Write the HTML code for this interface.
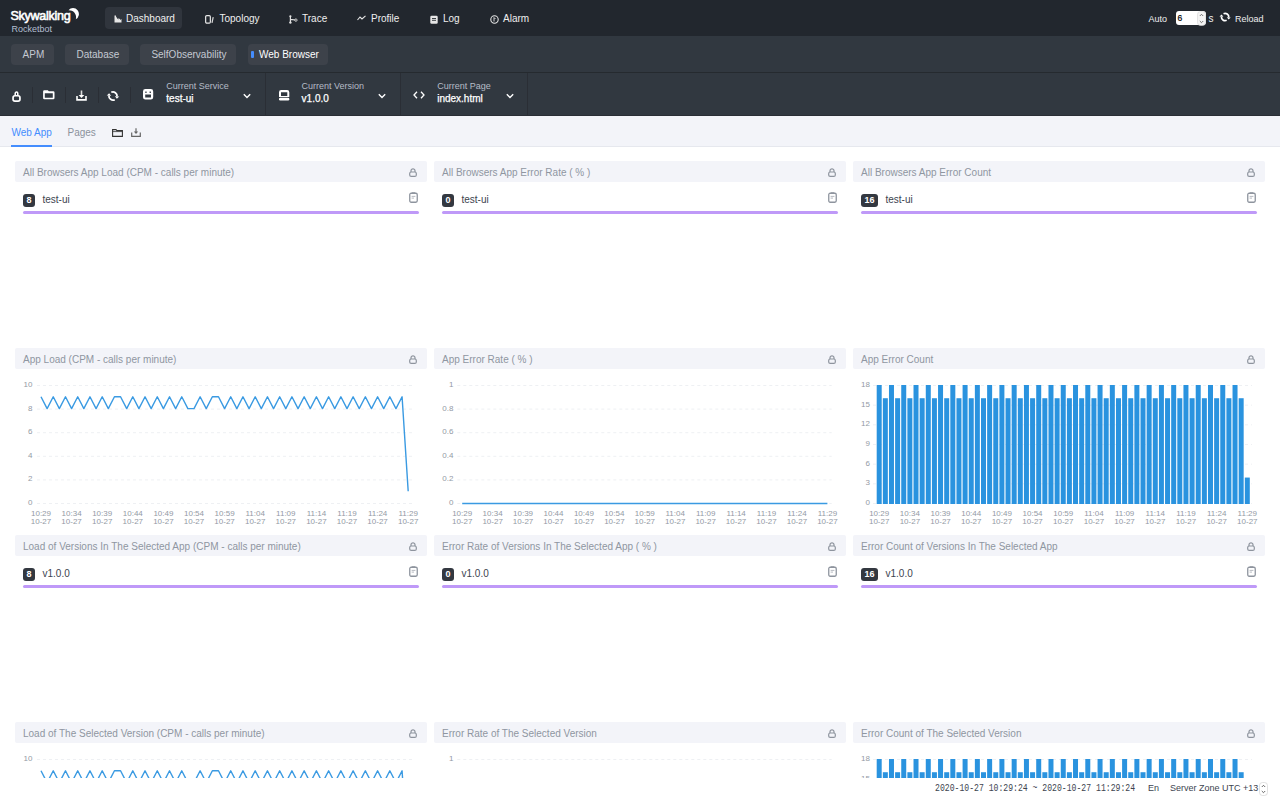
<!DOCTYPE html><html><head><meta charset="utf-8"><title>Rocketbot</title><style>
*{box-sizing:border-box;margin:0;padding:0}
html,body{width:1280px;height:800px;overflow:hidden;background:#fff;font-family:"Liberation Sans",sans-serif}
.a{position:absolute;white-space:nowrap}
#hdr{position:absolute;left:0;top:0;width:1280px;height:36px;background:#22272e}
#nav{position:absolute;left:0;top:36px;width:1280px;height:37px;background:#313840;border-bottom:1px solid #252a2f}
#bar{position:absolute;left:0;top:73px;width:1280px;height:43px;background:#313840;border-bottom:1px solid #2a2e35}
#tabs{position:absolute;left:0;top:116px;width:1280px;height:31px;background:#f3f4f9;border-bottom:1px solid #e6e8ee}
.navt{font-size:10px;color:#efefef;line-height:12px}
.navb{position:absolute;top:8px;height:21px;background:#30353d;border-radius:4px}
.grp{position:absolute;top:8px;height:21px;background:#3d424a;border-radius:4px}
.grpt{font-size:10px;color:#c4c9d2;line-height:12px}
.sep{position:absolute;top:87px;width:1px;height:16px;background:#2a2e35}
.lbl{font-size:9px;color:#b5bcc7;line-height:10px}
.val{font-size:10px;color:#fff;line-height:12px;-webkit-text-stroke:0.25px #fff}
.card-h{position:absolute;height:21px;width:412px;background:#f3f4f9;border-radius:2px}
.card-t{font-size:10px;color:#8f96a1;line-height:12px}
.badge{position:absolute;height:13px;border-radius:3px;background:#333840;color:#fff;font-size:9px;font-weight:700;line-height:13px;text-align:center;padding:0}
.item{font-size:10px;color:#3d444f;line-height:12px}
.pbar{position:absolute;height:3px;background:#bf99f8;border-radius:2px}
.ax{font-size:8px;color:#939aa5;line-height:8px;text-align:center}
.ay{font-size:8px;color:#939aa5;line-height:8px;text-align:right}
</style></head><body>
<div id="hdr">
<div class="a" style="left:10.5px;top:9.2px;font-size:12.5px;color:#fff;line-height:14px;letter-spacing:-0.25px;-webkit-text-stroke:0.6px #fff">Skywalking</div>
<svg class="a" style="left:67px;top:7px" width="13" height="14" viewBox="0 0 13 14"><path d="M1.52 3.16 A5.9 5.9 0 1 1 8.79 12.2 A7.1 7.1 0 0 0 1.52 3.16Z" fill="#fff"/></svg>
<div class="a" style="left:11.5px;top:24px;font-size:9px;color:#b4bfd2;line-height:10px">Rocketbot</div>
<div class="navb" style="left:105px;top:7px;width:77px;height:22px"></div>
<div class="a" style="left:114px;top:14.5px;line-height:0"><svg width="8" height="8" viewBox="0 0 8 8"><path d="M0.5 0.5V7.5H7.5V4L6 5V3.5L4.5 4.5V3L3 4V1.5L2 3V0.5Z" fill="#e6e6e6"/></svg></div>
<div class="a navt" style="left:126px;top:13.1px">Dashboard</div>
<div class="a" style="left:205px;top:14.5px;line-height:0"><svg width="9" height="9" viewBox="0 0 9 9"><rect x="0.65" y="0.65" width="4.7" height="7.4" rx="1.1" fill="none" stroke="#e6e6e6" stroke-width="1.2"/><path d="M8.2 2.2 L7 7.8" fill="none" stroke="#d8d8d8" stroke-width="1.2"/></svg></div>
<div class="a navt" style="left:219.5px;top:13.1px">Topology</div>
<div class="a" style="left:288.5px;top:14.5px;line-height:0"><svg width="9" height="9" viewBox="0 0 9 9"><path d="M1.4 1V7.6M1.4 4.4L6.4 5" stroke="#e0e0e0" stroke-width="1.2" fill="none"/><circle cx="1.4" cy="1.3" r="1.1" fill="#e0e0e0"/><circle cx="1.4" cy="7.6" r="1.2" fill="#e0e0e0"/><circle cx="6.9" cy="5.1" r="1.2" fill="none" stroke="#d0d0d0" stroke-width="0.9"/></svg></div>
<div class="a navt" style="left:302px;top:13.1px">Trace</div>
<div class="a" style="left:357px;top:14.5px;line-height:0"><svg width="9" height="6" viewBox="0 0 9 6"><path d="M0.5 5L3 2L5 4L8.5 0.8" stroke="#e6e6e6" stroke-width="1.1" fill="none"/></svg></div>
<div class="a navt" style="left:371px;top:13.1px">Profile</div>
<div class="a" style="left:430px;top:14.5px;line-height:0"><svg width="8" height="9" viewBox="0 0 8 9"><rect x="0.3" y="0.8" width="7.4" height="8" rx="1.3" fill="#e6e6e6"/><path d="M2 3.5H6M2 5.3H6" stroke="#252a2f" stroke-width="0.9"/></svg></div>
<div class="a navt" style="left:443px;top:13.1px">Log</div>
<div class="a" style="left:490px;top:14.5px;line-height:0"><svg width="9" height="9" viewBox="0 0 9 9"><circle cx="4.5" cy="4.5" r="3.7" fill="none" stroke="#e6e6e6" stroke-width="1.1"/><path d="M4 2.5V6.5M4 2.5L5.5 4" stroke="#e6e6e6" stroke-width="0.9" fill="none"/></svg></div>
<div class="a navt" style="left:503px;top:13.1px">Alarm</div>
<div class="a navt" style="left:1148.5px;top:13px;font-size:9px">Auto</div>
<div class="a" style="left:1176px;top:11px;width:30px;height:14px;background:#fff;border-radius:3px"></div>
<div class="a" style="left:1177.5px;top:13px;font-size:8.5px;color:#000;line-height:10px;-webkit-text-stroke:0.2px #000">6</div>
<svg class="a" style="left:1197px;top:11px" width="9" height="15" viewBox="0 0 9 15"><rect x="0.5" y="0.5" width="8" height="14" rx="3" fill="#f4f4f4" stroke="#d4d4d4" stroke-width="0.6"/><path d="M2.8 5L4.5 3.3L6.2 5M2.8 10L4.5 11.7L6.2 10" stroke="#555" stroke-width="0.8" fill="none"/></svg>
<div class="a navt" style="left:1208.5px;top:13.3px">s</div>
<svg class="a" style="left:1217px;top:8.1px" width="18" height="18" viewBox="0 0 20 20"><path d="M7.27 6.28A4.1 4.1 0 0 1 13.08 10.36M10.73 13.72A4.1 4.1 0 0 1 4.92 9.64" stroke="#fff" stroke-width="1.9" fill="none"/><path d="M15.27 10.55L10.89 10.17L12.86 12.85Z M2.73 9.45L7.11 9.83L5.14 7.15Z" fill="#fff"/></svg>
<div class="a navt" style="left:1235px;top:13px;font-size:9px">Reload</div>
</div>
<div id="nav">
<div class="grp" style="left:10.6px;width:43.8px"></div>
<div class="grp" style="left:65px;width:64.30000000000001px"></div>
<div class="grp" style="left:140px;width:96px"></div>
<div class="grp" style="left:247.5px;width:80.5px"></div>
<div class="a grpt" style="left:22.6px;top:13px;color:#c4c9d2">APM</div>
<div class="a grpt" style="left:76.5px;top:13px;color:#c4c9d2">Database</div>
<div class="a grpt" style="left:151.4px;top:13px;color:#c4c9d2">SelfObservability</div>
<div class="a grpt" style="left:259px;top:13px;color:#fff">Web Browser</div>
<div class="a" style="left:251px;top:15px;width:2.5px;height:7px;background:#448dfe;border-radius:1px"></div>
</div>
<div id="bar"></div>
<div class="sep" style="left:32px"></div>
<div class="sep" style="left:64.5px"></div>
<div class="sep" style="left:97.5px"></div>
<div class="sep" style="left:129.5px"></div>
<div class="a" style="left:265px;top:73px;width:1px;height:42px;background:#2a2e35"></div>
<div class="a" style="left:400px;top:73px;width:1px;height:42px;background:#2a2e35"></div>
<div class="a" style="left:527px;top:73px;width:1px;height:42px;background:#2a2e35"></div>
<div class="a" style="left:11.5px;top:90.5px;line-height:0"><svg width="9" height="11" viewBox="0 0 9 11"><path d="M3.2 4.6V2.4A1.3 1.3 0 0 1 5.8 2.4V4.6" stroke="#fff" stroke-width="1.5" fill="none"/><rect x="1.05" y="4.75" width="6.9" height="5.4" rx="1.9" fill="none" stroke="#fff" stroke-width="1.7"/></svg></div>
<div class="a" style="left:42.7px;top:89.7px;line-height:0"><svg width="12" height="10" viewBox="0 0 12 10"><path fill="#fff" fill-rule="evenodd" d="M1.3 0.2H4.8L5.8 1.2H10.3A1.2 1.2 0 0 1 11.5 2.4V8.1A1.2 1.2 0 0 1 10.3 9.3H1.3A1.2 1.2 0 0 1 0.1 8.1V1.4A1.2 1.2 0 0 1 1.3 0.2ZM1.8 3.3V7.7H9.8V3.3Z"/></svg></div>
<div class="a" style="left:75.7px;top:90px;line-height:0"><svg width="11" height="11" viewBox="0 0 11 11"><path d="M1 6V9.9H10V6" stroke="#fff" stroke-width="1.6" fill="none"/><path d="M5.5 0.5V6" stroke="#ddd" stroke-width="1.6"/><path d="M2.6 5L5.5 7.9L8.4 5Z" fill="#fff"/></svg></div>
<div class="a" style="left:104px;top:86px;line-height:0"><svg width="20" height="20" viewBox="0 0 20 20"><path d="M7.27 6.28A4.1 4.1 0 0 1 13.08 10.36M10.73 13.72A4.1 4.1 0 0 1 4.92 9.64" stroke="#fff" stroke-width="1.8" fill="none"/><path d="M15.27 10.55L10.89 10.17L12.86 12.85Z M2.73 9.45L7.11 9.83L5.14 7.15Z" fill="#fff"/></svg></div>
<div class="a" style="left:142.8px;top:89.4px;line-height:0"><svg width="11" height="11" viewBox="0 0 11 11"><path fill="#fff" fill-rule="evenodd" d="M2.4 0H7.8A2.4 2.4 0 0 1 10.2 2.4V8.2A2.4 2.4 0 0 1 7.8 10.6H2.4A2.4 2.4 0 0 1 0 8.2V2.4A2.4 2.4 0 0 1 2.4 0ZM2.3 2.4V4H3.6V2.4ZM6.6 2.4V4H7.9V2.4ZM2.2 5.6V8.4H8V5.6Z"/></svg></div>
<div class="a" style="left:278.7px;top:89.5px;line-height:0"><svg width="11" height="11" viewBox="0 0 11 11"><path fill="#fff" fill-rule="evenodd" d="M2.2 0H8.1A2.2 2.2 0 0 1 10.3 2.2V7.1H0V2.2A2.2 2.2 0 0 1 2.2 0ZM2 2.3V6H8.3V2.3Z"/><rect x="0" y="7.7" width="10.3" height="2.8" rx="1.2" fill="#fff"/></svg></div>
<div class="a" style="left:413px;top:90px;line-height:0"><svg width="12" height="10" viewBox="0 0 12 10"><path d="M4 1.8L1 5L4 8.2M8 1.8L11 5L8 8.2" stroke="#fff" stroke-width="1.3" fill="none"/></svg></div>
<div class="a lbl" style="left:166.3px;top:81px">Current Service</div>
<div class="a val" style="left:166.3px;top:93px">test-ui</div>
<div class="a" style="left:243px;top:93px;line-height:0"><svg width="8" height="6" viewBox="0 0 8 6"><path d="M0.8 1.2L4 4.4L7.2 1.2" stroke="#fff" stroke-width="1.4" fill="none"/></svg></div>
<div class="a lbl" style="left:301.6px;top:81px">Current Version</div>
<div class="a val" style="left:301.6px;top:93px">v1.0.0</div>
<div class="a" style="left:378px;top:93px;line-height:0"><svg width="8" height="6" viewBox="0 0 8 6"><path d="M0.8 1.2L4 4.4L7.2 1.2" stroke="#fff" stroke-width="1.4" fill="none"/></svg></div>
<div class="a lbl" style="left:437.2px;top:81px">Current Page</div>
<div class="a val" style="left:437.2px;top:93px">index.html</div>
<div class="a" style="left:505.5px;top:93px;line-height:0"><svg width="8" height="6" viewBox="0 0 8 6"><path d="M0.8 1.2L4 4.4L7.2 1.2" stroke="#fff" stroke-width="1.4" fill="none"/></svg></div>
<div id="tabs"></div>
<div class="a" style="left:11.5px;top:126.8px;font-size:10px;color:#448dfe;line-height:12px">Web App</div>
<div class="a" style="left:11px;top:145.3px;width:41px;height:1.7px;background:#448dfe"></div>
<div class="a" style="left:67.5px;top:126.8px;font-size:10px;color:#8b929c;line-height:12px">Pages</div>
<svg class="a" style="left:111.5px;top:129px" width="11" height="8" viewBox="0 0 11 8"><path d="M0.6 0.6H4L4.9 1.6H10.4V7.4H0.6Z" fill="none" stroke="#333" stroke-width="1.1"/><path d="M0.6 2.6H10.4" stroke="#333" stroke-width="0.8"/></svg>
<svg class="a" style="left:131px;top:127.5px" width="10" height="9" viewBox="0 0 10 9"><path d="M0.7 4.5V8.3H9.3V4.5" stroke="#666" stroke-width="1.2" fill="none"/><path d="M5 0.3V5" stroke="#666" stroke-width="1.2"/><path d="M2.8 3.4L5 6L7.2 3.4Z" fill="#666"/></svg>
<div class="a" style="left:0;top:147px;width:1280px;height:631px;overflow:hidden">
<div class="card-h" style="left:15px;top:14px"></div>
<div class="a card-t" style="left:23px;top:20px">All Browsers App Load (CPM - calls per minute)</div>
<div class="a" style="left:409px;top:20.5px;line-height:0"><svg width="8" height="9" viewBox="0 0 8 9"><path d="M2 4V2.8A2 2 0 0 1 6 2.8V4" stroke="#8e949e" stroke-width="1.2" fill="none"/><rect x="0.7" y="4" width="6.6" height="4.4" rx="1.5" fill="none" stroke="#8e949e" stroke-width="1.2"/></svg></div>
<div class="badge" style="left:23px;top:47px;width:12px">8</div>
<div class="a item" style="left:42.5px;top:47px">test-ui</div>
<div class="a" style="left:408.5px;top:44.8px;line-height:0"><svg width="9" height="11" viewBox="0 0 9 11"><rect x="0.75" y="1.25" width="7.5" height="9" rx="1.4" fill="none" stroke="#8e949e" stroke-width="1.3"/><path d="M2.8 0.3H6.2V2H2.8Z" fill="#8e949e"/><path d="M2.6 4.4H6.4M2.6 6.1H5" stroke="#a4a9b1" stroke-width="0.8"/></svg></div>
<div class="pbar" style="left:23px;top:64px;width:396px"></div>
<div class="card-h" style="left:434px;top:14px"></div>
<div class="a card-t" style="left:442px;top:20px">All Browsers App Error Rate ( % )</div>
<div class="a" style="left:828px;top:20.5px;line-height:0"><svg width="8" height="9" viewBox="0 0 8 9"><path d="M2 4V2.8A2 2 0 0 1 6 2.8V4" stroke="#8e949e" stroke-width="1.2" fill="none"/><rect x="0.7" y="4" width="6.6" height="4.4" rx="1.5" fill="none" stroke="#8e949e" stroke-width="1.2"/></svg></div>
<div class="badge" style="left:442px;top:47px;width:12px">0</div>
<div class="a item" style="left:461.5px;top:47px">test-ui</div>
<div class="a" style="left:827.5px;top:44.8px;line-height:0"><svg width="9" height="11" viewBox="0 0 9 11"><rect x="0.75" y="1.25" width="7.5" height="9" rx="1.4" fill="none" stroke="#8e949e" stroke-width="1.3"/><path d="M2.8 0.3H6.2V2H2.8Z" fill="#8e949e"/><path d="M2.6 4.4H6.4M2.6 6.1H5" stroke="#a4a9b1" stroke-width="0.8"/></svg></div>
<div class="pbar" style="left:442px;top:64px;width:396px"></div>
<div class="card-h" style="left:853px;top:14px"></div>
<div class="a card-t" style="left:861px;top:20px">All Browsers App Error Count</div>
<div class="a" style="left:1247px;top:20.5px;line-height:0"><svg width="8" height="9" viewBox="0 0 8 9"><path d="M2 4V2.8A2 2 0 0 1 6 2.8V4" stroke="#8e949e" stroke-width="1.2" fill="none"/><rect x="0.7" y="4" width="6.6" height="4.4" rx="1.5" fill="none" stroke="#8e949e" stroke-width="1.2"/></svg></div>
<div class="badge" style="left:861px;top:47px;width:17px">16</div>
<div class="a item" style="left:885.5px;top:47px">test-ui</div>
<div class="a" style="left:1246.5px;top:44.8px;line-height:0"><svg width="9" height="11" viewBox="0 0 9 11"><rect x="0.75" y="1.25" width="7.5" height="9" rx="1.4" fill="none" stroke="#8e949e" stroke-width="1.3"/><path d="M2.8 0.3H6.2V2H2.8Z" fill="#8e949e"/><path d="M2.6 4.4H6.4M2.6 6.1H5" stroke="#a4a9b1" stroke-width="0.8"/></svg></div>
<div class="pbar" style="left:861px;top:64px;width:396px"></div>
<div class="card-h" style="left:15px;top:201px"></div>
<div class="a card-t" style="left:23px;top:207px">App Load (CPM - calls per minute)</div>
<div class="a" style="left:409px;top:207.5px;line-height:0"><svg width="8" height="9" viewBox="0 0 8 9"><path d="M2 4V2.8A2 2 0 0 1 6 2.8V4" stroke="#8e949e" stroke-width="1.2" fill="none"/><rect x="0.7" y="4" width="6.6" height="4.4" rx="1.5" fill="none" stroke="#8e949e" stroke-width="1.2"/></svg></div>
<div class="a ay" style="left:2.3999999999999986px;width:30px;top:234.0px">10</div>
<div class="a ay" style="left:2.3999999999999986px;width:30px;top:257.6px">8</div>
<div class="a ay" style="left:2.3999999999999986px;width:30px;top:281.2px">6</div>
<div class="a ay" style="left:2.3999999999999986px;width:30px;top:304.8px">4</div>
<div class="a ay" style="left:2.3999999999999986px;width:30px;top:328.4px">2</div>
<div class="a ay" style="left:2.3999999999999986px;width:30px;top:352.0px">0</div>
<svg class="a" style="left:15px;top:201px" width="412" height="180"><line x1="22" y1="37.50" x2="397" y2="37.50" stroke="#eef0f3" stroke-width="1" stroke-dasharray="3 3"/><line x1="22" y1="61.10" x2="397" y2="61.10" stroke="#eef0f3" stroke-width="1" stroke-dasharray="3 3"/><line x1="22" y1="84.70" x2="397" y2="84.70" stroke="#eef0f3" stroke-width="1" stroke-dasharray="3 3"/><line x1="22" y1="108.30" x2="397" y2="108.30" stroke="#eef0f3" stroke-width="1" stroke-dasharray="3 3"/><line x1="22" y1="131.90" x2="397" y2="131.90" stroke="#eef0f3" stroke-width="1" stroke-dasharray="3 3"/><line x1="22" y1="155.50" x2="397" y2="155.50" stroke="#eef0f3" stroke-width="1" stroke-dasharray="3 3"/><polyline points="26.00,48.80 32.12,60.60 38.24,48.80 44.36,60.60 50.48,48.80 56.60,60.60 62.72,48.80 68.84,60.60 74.96,48.80 81.08,60.60 87.20,48.80 93.32,60.60 99.44,48.80 105.56,48.80 111.68,60.60 117.80,48.80 123.92,60.60 130.04,48.80 136.16,60.60 142.28,48.80 148.40,60.60 154.52,48.80 160.64,60.60 166.76,48.80 172.88,60.60 179.00,60.60 185.12,48.80 191.24,60.60 197.36,48.80 203.48,48.80 209.60,60.60 215.72,48.80 221.84,60.60 227.96,48.80 234.08,60.60 240.20,48.80 246.32,60.60 252.44,48.80 258.56,60.60 264.68,48.80 270.80,60.60 276.92,48.80 283.04,60.60 289.16,48.80 295.28,60.60 301.40,48.80 307.52,60.60 313.64,48.80 319.76,60.60 325.88,48.80 332.00,60.60 338.12,48.80 344.24,60.60 350.36,48.80 356.48,60.60 362.60,48.80 368.72,60.60 374.84,48.80 380.96,60.60 387.08,48.80 393.20,143.20" fill="none" stroke="#3a9ae2" stroke-width="1.4" stroke-linejoin="round"/></svg>
<div class="a ax" style="left:21.0px;width:40px;top:362.5px">10:29<br>10-27</div>
<div class="a ax" style="left:51.599999999999994px;width:40px;top:362.5px">10:34<br>10-27</div>
<div class="a ax" style="left:82.2px;width:40px;top:362.5px">10:39<br>10-27</div>
<div class="a ax" style="left:112.80000000000001px;width:40px;top:362.5px">10:44<br>10-27</div>
<div class="a ax" style="left:143.4px;width:40px;top:362.5px">10:49<br>10-27</div>
<div class="a ax" style="left:174.0px;width:40px;top:362.5px">10:54<br>10-27</div>
<div class="a ax" style="left:204.6px;width:40px;top:362.5px">10:59<br>10-27</div>
<div class="a ax" style="left:235.20000000000002px;width:40px;top:362.5px">11:04<br>10-27</div>
<div class="a ax" style="left:265.8px;width:40px;top:362.5px">11:09<br>10-27</div>
<div class="a ax" style="left:296.4px;width:40px;top:362.5px">11:14<br>10-27</div>
<div class="a ax" style="left:327.0px;width:40px;top:362.5px">11:19<br>10-27</div>
<div class="a ax" style="left:357.6px;width:40px;top:362.5px">11:24<br>10-27</div>
<div class="a ax" style="left:388.2px;width:40px;top:362.5px">11:29<br>10-27</div>
<div class="card-h" style="left:434px;top:201px"></div>
<div class="a card-t" style="left:442px;top:207px">App Error Rate ( % )</div>
<div class="a" style="left:828px;top:207.5px;line-height:0"><svg width="8" height="9" viewBox="0 0 8 9"><path d="M2 4V2.8A2 2 0 0 1 6 2.8V4" stroke="#8e949e" stroke-width="1.2" fill="none"/><rect x="0.7" y="4" width="6.6" height="4.4" rx="1.5" fill="none" stroke="#8e949e" stroke-width="1.2"/></svg></div>
<div class="a ay" style="left:423.4px;width:30px;top:234.0px">1</div>
<div class="a ay" style="left:423.4px;width:30px;top:257.6px">0.8</div>
<div class="a ay" style="left:423.4px;width:30px;top:281.2px">0.6</div>
<div class="a ay" style="left:423.4px;width:30px;top:304.8px">0.4</div>
<div class="a ay" style="left:423.4px;width:30px;top:328.4px">0.2</div>
<div class="a ay" style="left:423.4px;width:30px;top:352.0px">0</div>
<svg class="a" style="left:434px;top:201px" width="412" height="180"><line x1="23.3" y1="37.50" x2="397.7" y2="37.50" stroke="#eef0f3" stroke-width="1" stroke-dasharray="3 3"/><line x1="23.3" y1="61.10" x2="397.7" y2="61.10" stroke="#eef0f3" stroke-width="1" stroke-dasharray="3 3"/><line x1="23.3" y1="84.70" x2="397.7" y2="84.70" stroke="#eef0f3" stroke-width="1" stroke-dasharray="3 3"/><line x1="23.3" y1="108.30" x2="397.7" y2="108.30" stroke="#eef0f3" stroke-width="1" stroke-dasharray="3 3"/><line x1="23.3" y1="131.90" x2="397.7" y2="131.90" stroke="#eef0f3" stroke-width="1" stroke-dasharray="3 3"/><line x1="23.3" y1="155.50" x2="397.7" y2="155.50" stroke="#eef0f3" stroke-width="1" stroke-dasharray="3 3"/><line x1="28.2" y1="155.50" x2="393.4" y2="155.50" stroke="#3a9ae2" stroke-width="1.4"/></svg>
<div class="a ax" style="left:442.2px;width:40px;top:362.5px">10:29<br>10-27</div>
<div class="a ax" style="left:472.6333333333333px;width:40px;top:362.5px">10:34<br>10-27</div>
<div class="a ax" style="left:503.0666666666666px;width:40px;top:362.5px">10:39<br>10-27</div>
<div class="a ax" style="left:533.5px;width:40px;top:362.5px">10:44<br>10-27</div>
<div class="a ax" style="left:563.9333333333333px;width:40px;top:362.5px">10:49<br>10-27</div>
<div class="a ax" style="left:594.3666666666667px;width:40px;top:362.5px">10:54<br>10-27</div>
<div class="a ax" style="left:624.8px;width:40px;top:362.5px">10:59<br>10-27</div>
<div class="a ax" style="left:655.2333333333333px;width:40px;top:362.5px">11:04<br>10-27</div>
<div class="a ax" style="left:685.6666666666666px;width:40px;top:362.5px">11:09<br>10-27</div>
<div class="a ax" style="left:716.1px;width:40px;top:362.5px">11:14<br>10-27</div>
<div class="a ax" style="left:746.5333333333333px;width:40px;top:362.5px">11:19<br>10-27</div>
<div class="a ax" style="left:776.9666666666667px;width:40px;top:362.5px">11:24<br>10-27</div>
<div class="a ax" style="left:807.4px;width:40px;top:362.5px">11:29<br>10-27</div>
<div class="card-h" style="left:853px;top:201px"></div>
<div class="a card-t" style="left:861px;top:207px">App Error Count</div>
<div class="a" style="left:1247px;top:207.5px;line-height:0"><svg width="8" height="9" viewBox="0 0 8 9"><path d="M2 4V2.8A2 2 0 0 1 6 2.8V4" stroke="#8e949e" stroke-width="1.2" fill="none"/><rect x="0.7" y="4" width="6.6" height="4.4" rx="1.5" fill="none" stroke="#8e949e" stroke-width="1.2"/></svg></div>
<div class="a ay" style="left:840px;width:30px;top:234.0px">18</div>
<div class="a ay" style="left:840px;width:30px;top:253.66666666666669px">15</div>
<div class="a ay" style="left:840px;width:30px;top:273.3333333333333px">12</div>
<div class="a ay" style="left:840px;width:30px;top:293.0px">9</div>
<div class="a ay" style="left:840px;width:30px;top:312.6666666666667px">6</div>
<div class="a ay" style="left:840px;width:30px;top:332.3333333333333px">3</div>
<div class="a ay" style="left:840px;width:30px;top:352.0px">0</div>
<svg class="a" style="left:853px;top:201px" width="412" height="180"><line x1="20" y1="37.50" x2="399" y2="37.50" stroke="#eef0f3" stroke-width="1" stroke-dasharray="3 3"/><line x1="20" y1="57.17" x2="399" y2="57.17" stroke="#eef0f3" stroke-width="1" stroke-dasharray="3 3"/><line x1="20" y1="76.83" x2="399" y2="76.83" stroke="#eef0f3" stroke-width="1" stroke-dasharray="3 3"/><line x1="20" y1="96.50" x2="399" y2="96.50" stroke="#eef0f3" stroke-width="1" stroke-dasharray="3 3"/><line x1="20" y1="116.17" x2="399" y2="116.17" stroke="#eef0f3" stroke-width="1" stroke-dasharray="3 3"/><line x1="20" y1="135.83" x2="399" y2="135.83" stroke="#eef0f3" stroke-width="1" stroke-dasharray="3 3"/><line x1="20" y1="155.50" x2="399" y2="155.50" stroke="#eef0f3" stroke-width="1" stroke-dasharray="3 3"/><rect x="23.70" y="37.00" width="5" height="119.00" fill="#2a93df"/><rect x="29.84" y="50.22" width="5" height="105.78" fill="#2a93df"/><rect x="35.97" y="37.00" width="5" height="119.00" fill="#2a93df"/><rect x="42.11" y="50.22" width="5" height="105.78" fill="#2a93df"/><rect x="48.24" y="37.00" width="5" height="119.00" fill="#2a93df"/><rect x="54.38" y="50.22" width="5" height="105.78" fill="#2a93df"/><rect x="60.51" y="37.00" width="5" height="119.00" fill="#2a93df"/><rect x="66.65" y="50.22" width="5" height="105.78" fill="#2a93df"/><rect x="72.78" y="37.00" width="5" height="119.00" fill="#2a93df"/><rect x="78.92" y="50.22" width="5" height="105.78" fill="#2a93df"/><rect x="85.05" y="37.00" width="5" height="119.00" fill="#2a93df"/><rect x="91.19" y="50.22" width="5" height="105.78" fill="#2a93df"/><rect x="97.32" y="37.00" width="5" height="119.00" fill="#2a93df"/><rect x="103.46" y="50.22" width="5" height="105.78" fill="#2a93df"/><rect x="109.59" y="37.00" width="5" height="119.00" fill="#2a93df"/><rect x="115.73" y="50.22" width="5" height="105.78" fill="#2a93df"/><rect x="121.86" y="37.00" width="5" height="119.00" fill="#2a93df"/><rect x="128.00" y="50.22" width="5" height="105.78" fill="#2a93df"/><rect x="134.13" y="37.00" width="5" height="119.00" fill="#2a93df"/><rect x="140.27" y="50.22" width="5" height="105.78" fill="#2a93df"/><rect x="146.40" y="37.00" width="5" height="119.00" fill="#2a93df"/><rect x="152.53" y="50.22" width="5" height="105.78" fill="#2a93df"/><rect x="158.67" y="37.00" width="5" height="119.00" fill="#2a93df"/><rect x="164.81" y="50.22" width="5" height="105.78" fill="#2a93df"/><rect x="170.94" y="37.00" width="5" height="119.00" fill="#2a93df"/><rect x="177.08" y="50.22" width="5" height="105.78" fill="#2a93df"/><rect x="183.21" y="37.00" width="5" height="119.00" fill="#2a93df"/><rect x="189.34" y="50.22" width="5" height="105.78" fill="#2a93df"/><rect x="195.48" y="37.00" width="5" height="119.00" fill="#2a93df"/><rect x="201.62" y="50.22" width="5" height="105.78" fill="#2a93df"/><rect x="207.75" y="37.00" width="5" height="119.00" fill="#2a93df"/><rect x="213.89" y="50.22" width="5" height="105.78" fill="#2a93df"/><rect x="220.02" y="37.00" width="5" height="119.00" fill="#2a93df"/><rect x="226.16" y="50.22" width="5" height="105.78" fill="#2a93df"/><rect x="232.29" y="37.00" width="5" height="119.00" fill="#2a93df"/><rect x="238.43" y="50.22" width="5" height="105.78" fill="#2a93df"/><rect x="244.56" y="37.00" width="5" height="119.00" fill="#2a93df"/><rect x="250.70" y="50.22" width="5" height="105.78" fill="#2a93df"/><rect x="256.83" y="37.00" width="5" height="119.00" fill="#2a93df"/><rect x="262.97" y="50.22" width="5" height="105.78" fill="#2a93df"/><rect x="269.10" y="37.00" width="5" height="119.00" fill="#2a93df"/><rect x="275.24" y="50.22" width="5" height="105.78" fill="#2a93df"/><rect x="281.37" y="37.00" width="5" height="119.00" fill="#2a93df"/><rect x="287.50" y="50.22" width="5" height="105.78" fill="#2a93df"/><rect x="293.64" y="37.00" width="5" height="119.00" fill="#2a93df"/><rect x="299.78" y="50.22" width="5" height="105.78" fill="#2a93df"/><rect x="305.91" y="37.00" width="5" height="119.00" fill="#2a93df"/><rect x="312.05" y="50.22" width="5" height="105.78" fill="#2a93df"/><rect x="318.18" y="37.00" width="5" height="119.00" fill="#2a93df"/><rect x="324.31" y="50.22" width="5" height="105.78" fill="#2a93df"/><rect x="330.45" y="37.00" width="5" height="119.00" fill="#2a93df"/><rect x="336.59" y="50.22" width="5" height="105.78" fill="#2a93df"/><rect x="342.72" y="37.00" width="5" height="119.00" fill="#2a93df"/><rect x="348.86" y="50.22" width="5" height="105.78" fill="#2a93df"/><rect x="354.99" y="37.00" width="5" height="119.00" fill="#2a93df"/><rect x="361.12" y="50.22" width="5" height="105.78" fill="#2a93df"/><rect x="367.26" y="37.00" width="5" height="119.00" fill="#2a93df"/><rect x="373.40" y="50.22" width="5" height="105.78" fill="#2a93df"/><rect x="379.53" y="37.00" width="5" height="119.00" fill="#2a93df"/><rect x="385.67" y="50.22" width="5" height="105.78" fill="#2a93df"/><rect x="391.80" y="129.56" width="5" height="26.44" fill="#2a93df"/></svg>
<div class="a ax" style="left:859.2px;width:40px;top:362.5px">10:29<br>10-27</div>
<div class="a ax" style="left:889.875px;width:40px;top:362.5px">10:34<br>10-27</div>
<div class="a ax" style="left:920.5500000000001px;width:40px;top:362.5px">10:39<br>10-27</div>
<div class="a ax" style="left:951.225px;width:40px;top:362.5px">10:44<br>10-27</div>
<div class="a ax" style="left:981.9000000000001px;width:40px;top:362.5px">10:49<br>10-27</div>
<div class="a ax" style="left:1012.575px;width:40px;top:362.5px">10:54<br>10-27</div>
<div class="a ax" style="left:1043.25px;width:40px;top:362.5px">10:59<br>10-27</div>
<div class="a ax" style="left:1073.9250000000002px;width:40px;top:362.5px">11:04<br>10-27</div>
<div class="a ax" style="left:1104.6000000000001px;width:40px;top:362.5px">11:09<br>10-27</div>
<div class="a ax" style="left:1135.275px;width:40px;top:362.5px">11:14<br>10-27</div>
<div class="a ax" style="left:1165.95px;width:40px;top:362.5px">11:19<br>10-27</div>
<div class="a ax" style="left:1196.625px;width:40px;top:362.5px">11:24<br>10-27</div>
<div class="a ax" style="left:1227.3000000000002px;width:40px;top:362.5px">11:29<br>10-27</div>
<div class="card-h" style="left:15px;top:388px"></div>
<div class="a card-t" style="left:23px;top:394px">Load of Versions In The Selected App (CPM - calls per minute)</div>
<div class="a" style="left:409px;top:394.5px;line-height:0"><svg width="8" height="9" viewBox="0 0 8 9"><path d="M2 4V2.8A2 2 0 0 1 6 2.8V4" stroke="#8e949e" stroke-width="1.2" fill="none"/><rect x="0.7" y="4" width="6.6" height="4.4" rx="1.5" fill="none" stroke="#8e949e" stroke-width="1.2"/></svg></div>
<div class="badge" style="left:23px;top:421px;width:12px">8</div>
<div class="a item" style="left:42.5px;top:421px">v1.0.0</div>
<div class="a" style="left:408.5px;top:418.8px;line-height:0"><svg width="9" height="11" viewBox="0 0 9 11"><rect x="0.75" y="1.25" width="7.5" height="9" rx="1.4" fill="none" stroke="#8e949e" stroke-width="1.3"/><path d="M2.8 0.3H6.2V2H2.8Z" fill="#8e949e"/><path d="M2.6 4.4H6.4M2.6 6.1H5" stroke="#a4a9b1" stroke-width="0.8"/></svg></div>
<div class="pbar" style="left:23px;top:438px;width:396px"></div>
<div class="card-h" style="left:434px;top:388px"></div>
<div class="a card-t" style="left:442px;top:394px">Error Rate of Versions In The Selected App ( % )</div>
<div class="a" style="left:828px;top:394.5px;line-height:0"><svg width="8" height="9" viewBox="0 0 8 9"><path d="M2 4V2.8A2 2 0 0 1 6 2.8V4" stroke="#8e949e" stroke-width="1.2" fill="none"/><rect x="0.7" y="4" width="6.6" height="4.4" rx="1.5" fill="none" stroke="#8e949e" stroke-width="1.2"/></svg></div>
<div class="badge" style="left:442px;top:421px;width:12px">0</div>
<div class="a item" style="left:461.5px;top:421px">v1.0.0</div>
<div class="a" style="left:827.5px;top:418.8px;line-height:0"><svg width="9" height="11" viewBox="0 0 9 11"><rect x="0.75" y="1.25" width="7.5" height="9" rx="1.4" fill="none" stroke="#8e949e" stroke-width="1.3"/><path d="M2.8 0.3H6.2V2H2.8Z" fill="#8e949e"/><path d="M2.6 4.4H6.4M2.6 6.1H5" stroke="#a4a9b1" stroke-width="0.8"/></svg></div>
<div class="pbar" style="left:442px;top:438px;width:396px"></div>
<div class="card-h" style="left:853px;top:388px"></div>
<div class="a card-t" style="left:861px;top:394px">Error Count of Versions In The Selected App</div>
<div class="a" style="left:1247px;top:394.5px;line-height:0"><svg width="8" height="9" viewBox="0 0 8 9"><path d="M2 4V2.8A2 2 0 0 1 6 2.8V4" stroke="#8e949e" stroke-width="1.2" fill="none"/><rect x="0.7" y="4" width="6.6" height="4.4" rx="1.5" fill="none" stroke="#8e949e" stroke-width="1.2"/></svg></div>
<div class="badge" style="left:861px;top:421px;width:17px">16</div>
<div class="a item" style="left:885.5px;top:421px">v1.0.0</div>
<div class="a" style="left:1246.5px;top:418.8px;line-height:0"><svg width="9" height="11" viewBox="0 0 9 11"><rect x="0.75" y="1.25" width="7.5" height="9" rx="1.4" fill="none" stroke="#8e949e" stroke-width="1.3"/><path d="M2.8 0.3H6.2V2H2.8Z" fill="#8e949e"/><path d="M2.6 4.4H6.4M2.6 6.1H5" stroke="#a4a9b1" stroke-width="0.8"/></svg></div>
<div class="pbar" style="left:861px;top:438px;width:396px"></div>
<div class="card-h" style="left:15px;top:575px"></div>
<div class="a card-t" style="left:23px;top:581px">Load of The Selected Version (CPM - calls per minute)</div>
<div class="a" style="left:409px;top:581.5px;line-height:0"><svg width="8" height="9" viewBox="0 0 8 9"><path d="M2 4V2.8A2 2 0 0 1 6 2.8V4" stroke="#8e949e" stroke-width="1.2" fill="none"/><rect x="0.7" y="4" width="6.6" height="4.4" rx="1.5" fill="none" stroke="#8e949e" stroke-width="1.2"/></svg></div>
<div class="a ay" style="left:2.3999999999999986px;width:30px;top:608.0px">10</div>
<div class="a ay" style="left:2.3999999999999986px;width:30px;top:631.6px">8</div>
<div class="a ay" style="left:2.3999999999999986px;width:30px;top:655.2px">6</div>
<div class="a ay" style="left:2.3999999999999986px;width:30px;top:678.8px">4</div>
<div class="a ay" style="left:2.3999999999999986px;width:30px;top:702.4px">2</div>
<div class="a ay" style="left:2.3999999999999986px;width:30px;top:726.0px">0</div>
<svg class="a" style="left:15px;top:575px" width="412" height="180"><line x1="22" y1="37.50" x2="397" y2="37.50" stroke="#eef0f3" stroke-width="1" stroke-dasharray="3 3"/><line x1="22" y1="61.10" x2="397" y2="61.10" stroke="#eef0f3" stroke-width="1" stroke-dasharray="3 3"/><line x1="22" y1="84.70" x2="397" y2="84.70" stroke="#eef0f3" stroke-width="1" stroke-dasharray="3 3"/><line x1="22" y1="108.30" x2="397" y2="108.30" stroke="#eef0f3" stroke-width="1" stroke-dasharray="3 3"/><line x1="22" y1="131.90" x2="397" y2="131.90" stroke="#eef0f3" stroke-width="1" stroke-dasharray="3 3"/><line x1="22" y1="155.50" x2="397" y2="155.50" stroke="#eef0f3" stroke-width="1" stroke-dasharray="3 3"/><polyline points="26.00,48.80 32.12,60.60 38.24,48.80 44.36,60.60 50.48,48.80 56.60,60.60 62.72,48.80 68.84,60.60 74.96,48.80 81.08,60.60 87.20,48.80 93.32,60.60 99.44,48.80 105.56,48.80 111.68,60.60 117.80,48.80 123.92,60.60 130.04,48.80 136.16,60.60 142.28,48.80 148.40,60.60 154.52,48.80 160.64,60.60 166.76,48.80 172.88,60.60 179.00,60.60 185.12,48.80 191.24,60.60 197.36,48.80 203.48,48.80 209.60,60.60 215.72,48.80 221.84,60.60 227.96,48.80 234.08,60.60 240.20,48.80 246.32,60.60 252.44,48.80 258.56,60.60 264.68,48.80 270.80,60.60 276.92,48.80 283.04,60.60 289.16,48.80 295.28,60.60 301.40,48.80 307.52,60.60 313.64,48.80 319.76,60.60 325.88,48.80 332.00,60.60 338.12,48.80 344.24,60.60 350.36,48.80 356.48,60.60 362.60,48.80 368.72,60.60 374.84,48.80 380.96,60.60 387.08,48.80 393.20,143.20" fill="none" stroke="#3a9ae2" stroke-width="1.4" stroke-linejoin="round"/></svg>
<div class="a ax" style="left:21.0px;width:40px;top:736.5px">10:29<br>10-27</div>
<div class="a ax" style="left:51.599999999999994px;width:40px;top:736.5px">10:34<br>10-27</div>
<div class="a ax" style="left:82.2px;width:40px;top:736.5px">10:39<br>10-27</div>
<div class="a ax" style="left:112.80000000000001px;width:40px;top:736.5px">10:44<br>10-27</div>
<div class="a ax" style="left:143.4px;width:40px;top:736.5px">10:49<br>10-27</div>
<div class="a ax" style="left:174.0px;width:40px;top:736.5px">10:54<br>10-27</div>
<div class="a ax" style="left:204.6px;width:40px;top:736.5px">10:59<br>10-27</div>
<div class="a ax" style="left:235.20000000000002px;width:40px;top:736.5px">11:04<br>10-27</div>
<div class="a ax" style="left:265.8px;width:40px;top:736.5px">11:09<br>10-27</div>
<div class="a ax" style="left:296.4px;width:40px;top:736.5px">11:14<br>10-27</div>
<div class="a ax" style="left:327.0px;width:40px;top:736.5px">11:19<br>10-27</div>
<div class="a ax" style="left:357.6px;width:40px;top:736.5px">11:24<br>10-27</div>
<div class="a ax" style="left:388.2px;width:40px;top:736.5px">11:29<br>10-27</div>
<div class="card-h" style="left:434px;top:575px"></div>
<div class="a card-t" style="left:442px;top:581px">Error Rate of The Selected Version</div>
<div class="a" style="left:828px;top:581.5px;line-height:0"><svg width="8" height="9" viewBox="0 0 8 9"><path d="M2 4V2.8A2 2 0 0 1 6 2.8V4" stroke="#8e949e" stroke-width="1.2" fill="none"/><rect x="0.7" y="4" width="6.6" height="4.4" rx="1.5" fill="none" stroke="#8e949e" stroke-width="1.2"/></svg></div>
<div class="a ay" style="left:423.4px;width:30px;top:608.0px">1</div>
<div class="a ay" style="left:423.4px;width:30px;top:631.6px">0.8</div>
<div class="a ay" style="left:423.4px;width:30px;top:655.2px">0.6</div>
<div class="a ay" style="left:423.4px;width:30px;top:678.8px">0.4</div>
<div class="a ay" style="left:423.4px;width:30px;top:702.4px">0.2</div>
<div class="a ay" style="left:423.4px;width:30px;top:726.0px">0</div>
<svg class="a" style="left:434px;top:575px" width="412" height="180"><line x1="23.3" y1="37.50" x2="397.7" y2="37.50" stroke="#eef0f3" stroke-width="1" stroke-dasharray="3 3"/><line x1="23.3" y1="61.10" x2="397.7" y2="61.10" stroke="#eef0f3" stroke-width="1" stroke-dasharray="3 3"/><line x1="23.3" y1="84.70" x2="397.7" y2="84.70" stroke="#eef0f3" stroke-width="1" stroke-dasharray="3 3"/><line x1="23.3" y1="108.30" x2="397.7" y2="108.30" stroke="#eef0f3" stroke-width="1" stroke-dasharray="3 3"/><line x1="23.3" y1="131.90" x2="397.7" y2="131.90" stroke="#eef0f3" stroke-width="1" stroke-dasharray="3 3"/><line x1="23.3" y1="155.50" x2="397.7" y2="155.50" stroke="#eef0f3" stroke-width="1" stroke-dasharray="3 3"/><line x1="28.2" y1="155.50" x2="393.4" y2="155.50" stroke="#3a9ae2" stroke-width="1.4"/></svg>
<div class="a ax" style="left:442.2px;width:40px;top:736.5px">10:29<br>10-27</div>
<div class="a ax" style="left:472.6333333333333px;width:40px;top:736.5px">10:34<br>10-27</div>
<div class="a ax" style="left:503.0666666666666px;width:40px;top:736.5px">10:39<br>10-27</div>
<div class="a ax" style="left:533.5px;width:40px;top:736.5px">10:44<br>10-27</div>
<div class="a ax" style="left:563.9333333333333px;width:40px;top:736.5px">10:49<br>10-27</div>
<div class="a ax" style="left:594.3666666666667px;width:40px;top:736.5px">10:54<br>10-27</div>
<div class="a ax" style="left:624.8px;width:40px;top:736.5px">10:59<br>10-27</div>
<div class="a ax" style="left:655.2333333333333px;width:40px;top:736.5px">11:04<br>10-27</div>
<div class="a ax" style="left:685.6666666666666px;width:40px;top:736.5px">11:09<br>10-27</div>
<div class="a ax" style="left:716.1px;width:40px;top:736.5px">11:14<br>10-27</div>
<div class="a ax" style="left:746.5333333333333px;width:40px;top:736.5px">11:19<br>10-27</div>
<div class="a ax" style="left:776.9666666666667px;width:40px;top:736.5px">11:24<br>10-27</div>
<div class="a ax" style="left:807.4px;width:40px;top:736.5px">11:29<br>10-27</div>
<div class="card-h" style="left:853px;top:575px"></div>
<div class="a card-t" style="left:861px;top:581px">Error Count of The Selected Version</div>
<div class="a" style="left:1247px;top:581.5px;line-height:0"><svg width="8" height="9" viewBox="0 0 8 9"><path d="M2 4V2.8A2 2 0 0 1 6 2.8V4" stroke="#8e949e" stroke-width="1.2" fill="none"/><rect x="0.7" y="4" width="6.6" height="4.4" rx="1.5" fill="none" stroke="#8e949e" stroke-width="1.2"/></svg></div>
<div class="a ay" style="left:840px;width:30px;top:608.0px">18</div>
<div class="a ay" style="left:840px;width:30px;top:627.6666666666666px">15</div>
<div class="a ay" style="left:840px;width:30px;top:647.3333333333334px">12</div>
<div class="a ay" style="left:840px;width:30px;top:667.0px">9</div>
<div class="a ay" style="left:840px;width:30px;top:686.6666666666666px">6</div>
<div class="a ay" style="left:840px;width:30px;top:706.3333333333334px">3</div>
<div class="a ay" style="left:840px;width:30px;top:726.0px">0</div>
<svg class="a" style="left:853px;top:575px" width="412" height="180"><line x1="20" y1="37.50" x2="399" y2="37.50" stroke="#eef0f3" stroke-width="1" stroke-dasharray="3 3"/><line x1="20" y1="57.17" x2="399" y2="57.17" stroke="#eef0f3" stroke-width="1" stroke-dasharray="3 3"/><line x1="20" y1="76.83" x2="399" y2="76.83" stroke="#eef0f3" stroke-width="1" stroke-dasharray="3 3"/><line x1="20" y1="96.50" x2="399" y2="96.50" stroke="#eef0f3" stroke-width="1" stroke-dasharray="3 3"/><line x1="20" y1="116.17" x2="399" y2="116.17" stroke="#eef0f3" stroke-width="1" stroke-dasharray="3 3"/><line x1="20" y1="135.83" x2="399" y2="135.83" stroke="#eef0f3" stroke-width="1" stroke-dasharray="3 3"/><line x1="20" y1="155.50" x2="399" y2="155.50" stroke="#eef0f3" stroke-width="1" stroke-dasharray="3 3"/><rect x="23.70" y="37.00" width="5" height="119.00" fill="#2a93df"/><rect x="29.84" y="50.22" width="5" height="105.78" fill="#2a93df"/><rect x="35.97" y="37.00" width="5" height="119.00" fill="#2a93df"/><rect x="42.11" y="50.22" width="5" height="105.78" fill="#2a93df"/><rect x="48.24" y="37.00" width="5" height="119.00" fill="#2a93df"/><rect x="54.38" y="50.22" width="5" height="105.78" fill="#2a93df"/><rect x="60.51" y="37.00" width="5" height="119.00" fill="#2a93df"/><rect x="66.65" y="50.22" width="5" height="105.78" fill="#2a93df"/><rect x="72.78" y="37.00" width="5" height="119.00" fill="#2a93df"/><rect x="78.92" y="50.22" width="5" height="105.78" fill="#2a93df"/><rect x="85.05" y="37.00" width="5" height="119.00" fill="#2a93df"/><rect x="91.19" y="50.22" width="5" height="105.78" fill="#2a93df"/><rect x="97.32" y="37.00" width="5" height="119.00" fill="#2a93df"/><rect x="103.46" y="50.22" width="5" height="105.78" fill="#2a93df"/><rect x="109.59" y="37.00" width="5" height="119.00" fill="#2a93df"/><rect x="115.73" y="50.22" width="5" height="105.78" fill="#2a93df"/><rect x="121.86" y="37.00" width="5" height="119.00" fill="#2a93df"/><rect x="128.00" y="50.22" width="5" height="105.78" fill="#2a93df"/><rect x="134.13" y="37.00" width="5" height="119.00" fill="#2a93df"/><rect x="140.27" y="50.22" width="5" height="105.78" fill="#2a93df"/><rect x="146.40" y="37.00" width="5" height="119.00" fill="#2a93df"/><rect x="152.53" y="50.22" width="5" height="105.78" fill="#2a93df"/><rect x="158.67" y="37.00" width="5" height="119.00" fill="#2a93df"/><rect x="164.81" y="50.22" width="5" height="105.78" fill="#2a93df"/><rect x="170.94" y="37.00" width="5" height="119.00" fill="#2a93df"/><rect x="177.08" y="50.22" width="5" height="105.78" fill="#2a93df"/><rect x="183.21" y="37.00" width="5" height="119.00" fill="#2a93df"/><rect x="189.34" y="50.22" width="5" height="105.78" fill="#2a93df"/><rect x="195.48" y="37.00" width="5" height="119.00" fill="#2a93df"/><rect x="201.62" y="50.22" width="5" height="105.78" fill="#2a93df"/><rect x="207.75" y="37.00" width="5" height="119.00" fill="#2a93df"/><rect x="213.89" y="50.22" width="5" height="105.78" fill="#2a93df"/><rect x="220.02" y="37.00" width="5" height="119.00" fill="#2a93df"/><rect x="226.16" y="50.22" width="5" height="105.78" fill="#2a93df"/><rect x="232.29" y="37.00" width="5" height="119.00" fill="#2a93df"/><rect x="238.43" y="50.22" width="5" height="105.78" fill="#2a93df"/><rect x="244.56" y="37.00" width="5" height="119.00" fill="#2a93df"/><rect x="250.70" y="50.22" width="5" height="105.78" fill="#2a93df"/><rect x="256.83" y="37.00" width="5" height="119.00" fill="#2a93df"/><rect x="262.97" y="50.22" width="5" height="105.78" fill="#2a93df"/><rect x="269.10" y="37.00" width="5" height="119.00" fill="#2a93df"/><rect x="275.24" y="50.22" width="5" height="105.78" fill="#2a93df"/><rect x="281.37" y="37.00" width="5" height="119.00" fill="#2a93df"/><rect x="287.50" y="50.22" width="5" height="105.78" fill="#2a93df"/><rect x="293.64" y="37.00" width="5" height="119.00" fill="#2a93df"/><rect x="299.78" y="50.22" width="5" height="105.78" fill="#2a93df"/><rect x="305.91" y="37.00" width="5" height="119.00" fill="#2a93df"/><rect x="312.05" y="50.22" width="5" height="105.78" fill="#2a93df"/><rect x="318.18" y="37.00" width="5" height="119.00" fill="#2a93df"/><rect x="324.31" y="50.22" width="5" height="105.78" fill="#2a93df"/><rect x="330.45" y="37.00" width="5" height="119.00" fill="#2a93df"/><rect x="336.59" y="50.22" width="5" height="105.78" fill="#2a93df"/><rect x="342.72" y="37.00" width="5" height="119.00" fill="#2a93df"/><rect x="348.86" y="50.22" width="5" height="105.78" fill="#2a93df"/><rect x="354.99" y="37.00" width="5" height="119.00" fill="#2a93df"/><rect x="361.12" y="50.22" width="5" height="105.78" fill="#2a93df"/><rect x="367.26" y="37.00" width="5" height="119.00" fill="#2a93df"/><rect x="373.40" y="50.22" width="5" height="105.78" fill="#2a93df"/><rect x="379.53" y="37.00" width="5" height="119.00" fill="#2a93df"/><rect x="385.67" y="50.22" width="5" height="105.78" fill="#2a93df"/><rect x="391.80" y="129.56" width="5" height="26.44" fill="#2a93df"/></svg>
<div class="a ax" style="left:859.2px;width:40px;top:736.5px">10:29<br>10-27</div>
<div class="a ax" style="left:889.875px;width:40px;top:736.5px">10:34<br>10-27</div>
<div class="a ax" style="left:920.5500000000001px;width:40px;top:736.5px">10:39<br>10-27</div>
<div class="a ax" style="left:951.225px;width:40px;top:736.5px">10:44<br>10-27</div>
<div class="a ax" style="left:981.9000000000001px;width:40px;top:736.5px">10:49<br>10-27</div>
<div class="a ax" style="left:1012.575px;width:40px;top:736.5px">10:54<br>10-27</div>
<div class="a ax" style="left:1043.25px;width:40px;top:736.5px">10:59<br>10-27</div>
<div class="a ax" style="left:1073.9250000000002px;width:40px;top:736.5px">11:04<br>10-27</div>
<div class="a ax" style="left:1104.6000000000001px;width:40px;top:736.5px">11:09<br>10-27</div>
<div class="a ax" style="left:1135.275px;width:40px;top:736.5px">11:14<br>10-27</div>
<div class="a ax" style="left:1165.95px;width:40px;top:736.5px">11:19<br>10-27</div>
<div class="a ax" style="left:1196.625px;width:40px;top:736.5px">11:24<br>10-27</div>
<div class="a ax" style="left:1227.3000000000002px;width:40px;top:736.5px">11:29<br>10-27</div>
</div>
<div class="a" style="left:0;top:778px;width:1280px;height:22px;background:#fff"></div>
<div class="a" style="left:934.5px;top:784px;font-family:'Liberation Mono',monospace;font-size:10px;transform:scaleX(0.813);transform-origin:0 0;color:#3d444f;line-height:10px">2020-10-27 10:29:24 ~ 2020-10-27 11:29:24</div>
<div class="a" style="left:1148px;top:782.8px;font-size:9px;color:#3d444f;line-height:10px">En</div>
<div class="a" style="left:1170px;top:782.8px;font-size:9px;color:#3d444f;line-height:10px">Server Zone UTC +13</div>
<svg class="a" style="left:1259px;top:782px" width="9" height="14" viewBox="0 0 9 14"><rect x="0.5" y="0.5" width="8" height="13" rx="3" fill="#fff" stroke="#ccc" stroke-width="0.6"/><path d="M2.8 5L4.5 3.3L6.2 5M2.8 9L4.5 10.7L6.2 9" stroke="#444" stroke-width="0.8" fill="none"/></svg>
</body></html>
